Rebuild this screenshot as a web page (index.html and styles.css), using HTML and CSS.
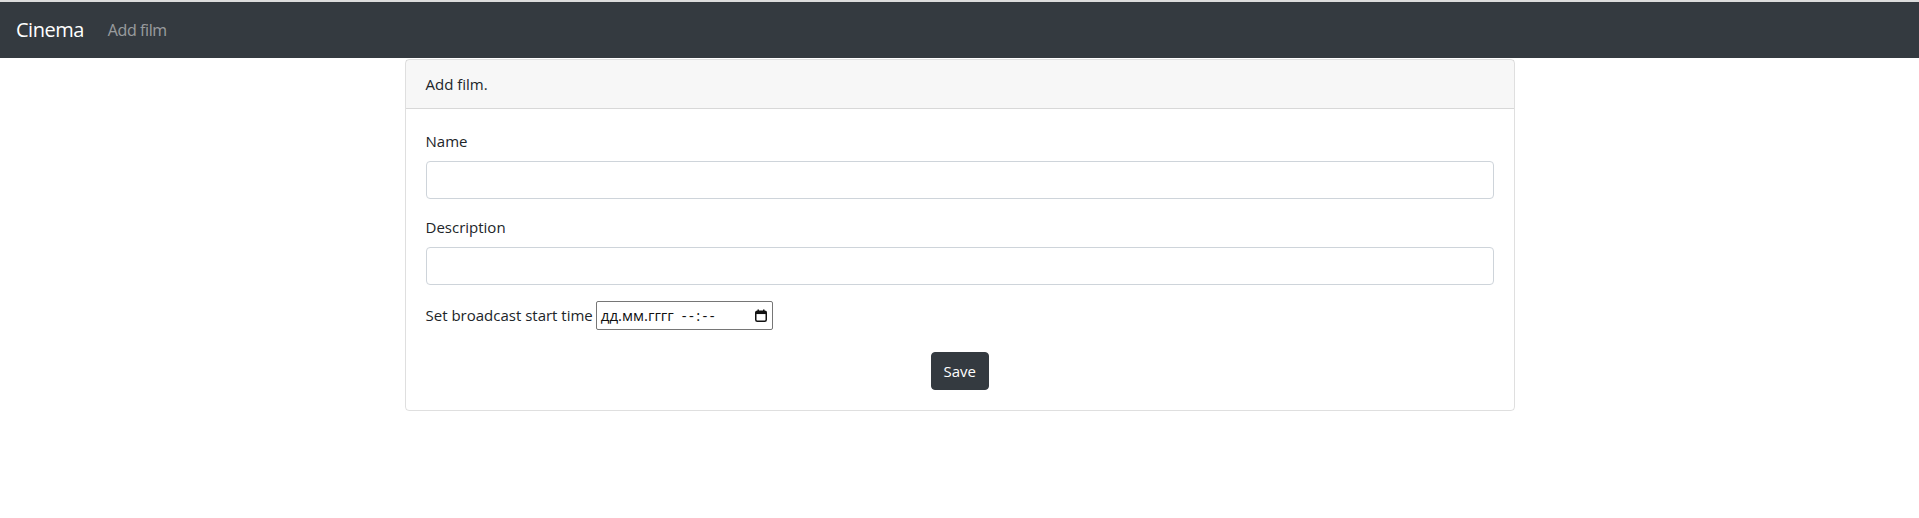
FILE: index.html
```html
<!DOCTYPE html>
<html lang="en">
<head>
<meta charset="utf-8">
<title>Cinema</title>
<link rel="stylesheet" href="styles.css">
</head>
<body>
<nav class="navbar">
  <a class="brand" href="#">Cinema</a>
  <a class="nav-link" href="#">Add film</a>
</nav>
<main class="container">
  <section class="card">
    <div class="card-header">Add film.</div>
    <form class="card-body">
      <div class="form-group">
        <label class="label" for="name">Name</label>
        <input class="form-control" id="name" type="text">
      </div>
      <div class="form-group">
        <label class="label" for="desc">Description</label>
        <input class="form-control" id="desc" type="text">
      </div>
      <div class="time-row">
        <span class="time-label">Set broadcast start time</span>
        <span class="dt-input">
          <span class="dt-text"><span class="dt-date">дд.мм.гггг</span><span class="dt-time">--:--</span></span>
          <svg class="dt-icon" viewBox="0 0 12 13" width="12" height="13" aria-hidden="true">
            <rect x="0.75" y="2.25" width="10.5" height="10" rx="1.5" fill="none" stroke="#111" stroke-width="1.5"/>
            <rect x="0.75" y="2.25" width="10.5" height="2.8" fill="#111"/>
            <rect x="2.5" y="0.5" width="1.5" height="2.5" fill="#111"/>
            <rect x="8" y="0.5" width="1.5" height="2.5" fill="#111"/>
          </svg>
        </span>
      </div>
      <div class="actions">
        <button class="btn" type="button">Save</button>
      </div>
    </form>
  </section>
</main>
</body>
</html>
```

FILE: styles.css
```css
* { box-sizing: border-box; }
html, body { margin: 0; padding: 0; }
body {
  font-family: "Open Sans", "Noto Sans", "Liberation Sans", sans-serif;
  font-size: 16px;
  line-height: 1.5;
  color: #212529;
  background: #fff;
  border-top: 2px solid #dcdcdc;
}
.navbar {
  display: flex;
  align-items: center;
  height: 56px;
  padding: 8px 16px;
  background: #343a40;
}
.brand {
  font-size: 20px;
  line-height: 30px;
  padding: 5px 0;
  margin-right: 16px;
  color: #fff;
  text-decoration: none;
  letter-spacing: -0.5px;
}
.nav-link {
  padding: 8px;
  color: rgba(255,255,255,.5);
  text-decoration: none;
  letter-spacing: -0.4px;
}
.container {
  width: 1140px;
  margin: 0 auto;
  padding: 0 15px;
}
.card {
  border: 1px solid rgba(0,0,0,.125);
  border-radius: 4px;
  margin-top: 1px;
}
.card-header {
  padding: 12px 20px;
  background: rgba(0,0,0,.03);
  border-bottom: 1px solid rgba(0,0,0,.125);
  font-size: 15px;
  line-height: 24px;
}
.card-body {
  padding: 20px;
  margin: 0;
}
.form-group { margin-bottom: 16px; }
.label {
  display: block;
  margin-bottom: 8px;
  font-size: 15px;
  line-height: 24px;
}
.form-control {
  display: block;
  width: 100%;
  height: 38px;
  padding: 6px 12px;
  font: inherit;
  color: #495057;
  border: 1px solid #ced4da;
  border-radius: 4px;
  background: #fff;
}
.time-row {
  display: flex;
  align-items: center;
  gap: 3px;
  margin-bottom: 22px;
}
.time-label {
  font-size: 15px;
}
.dt-input {
  display: inline-flex;
  align-items: center;
  justify-content: space-between;
  width: 177px;
  height: 29px;
  padding: 0 5px 0 4px;
  border: 1px solid #767676;
  border-radius: 2px;
  font-family: "Open Sans", "Noto Sans", sans-serif;
  font-size: 15px;
  color: #111;
}
.dt-text { white-space: nowrap; display: flex; }
.dt-time {
  margin-left: 8px;
  letter-spacing: 2.4px;
}
.dt-icon { flex: none; }
.actions { text-align: center; }
.btn {
  font: inherit;
  font-size: 15px;
  line-height: 24px;
  padding: 6px 12px;
  height: 38px;
  width: 58px;
  color: #fff;
  background: #343a40;
  border: 1px solid #343a40;
  border-radius: 4px;
}
```
